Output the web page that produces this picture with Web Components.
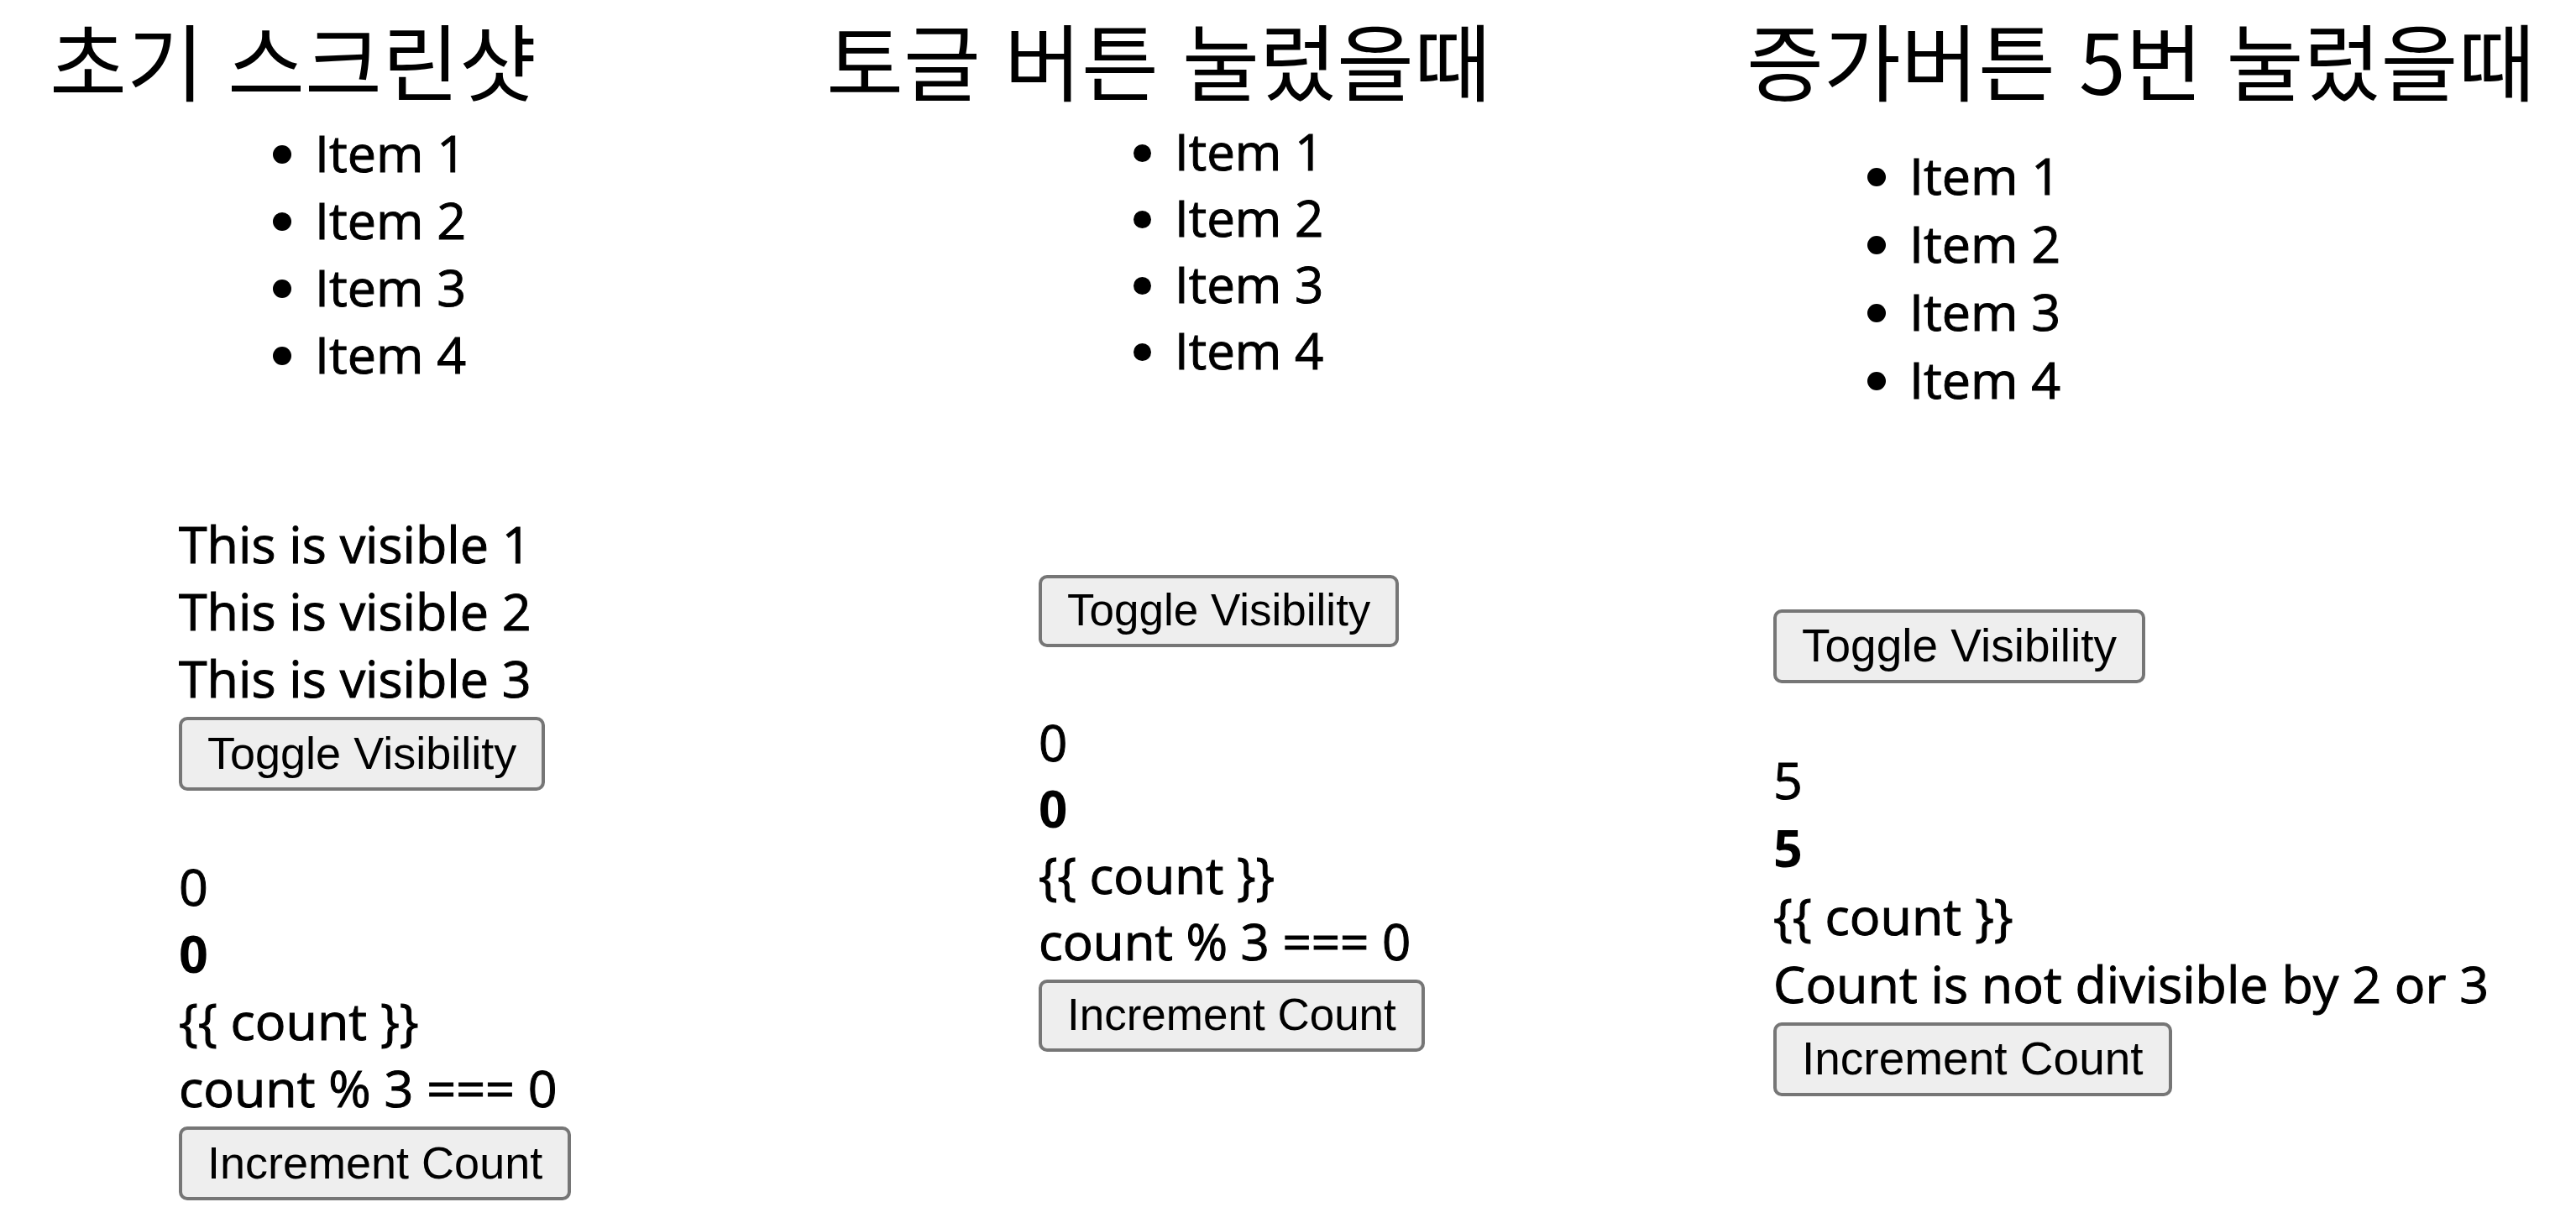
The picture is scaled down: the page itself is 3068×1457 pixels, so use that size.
<!DOCTYPE html>
<html lang="ko">
<head>
<meta charset="utf-8">
<meta name="viewport" content="width=device-width, initial-scale=1">
<title>Toggle and count states</title>
<style>
  body { margin: 0; background: #fff; color: #000; }
</style>
</head>
<body>
<template id="board-template">
  <style>
    :host {
      display: grid;
      grid-template-columns: 925fr 1096fr 988fr;
      padding-left: 59px;
      font-family: "Open Sans", "Noto Sans CJK KR", sans-serif;
    }
  </style>
  <slot></slot>
</template>

<template id="state-template">
  <style>
    :host { display: block; min-width: 0; font-size: var(--text); line-height: var(--line); }
    h2 {
      margin: 0 0 var(--list-gap);
      font: 400 100px/139px "Noto Sans CJK KR", sans-serif;
      white-space: nowrap;
    }
    .body { padding-left: var(--indent); white-space: nowrap; -webkit-text-stroke: 1px currentColor; }
    push-button { -webkit-text-stroke: 0; }
    ul { margin: 0 0 var(--block-gap); padding-left: 162px; }
    p { margin: 0; }
    b { -webkit-text-stroke: 0; }
    .group + .group { margin-top: 74px; }
  </style>
  <h2><slot name="title"></slot></h2>
  <div class="body">
    <ul><li>Item 1</li><li>Item 2</li><li>Item 3</li><li>Item 4</li></ul>
    <div class="group">
      <slot name="visible"></slot>
      <push-button>Toggle Visibility</push-button>
    </div>
    <div class="group">
      <p class="count"></p>
      <p><b class="count"></b></p>
      <p>{{ count }}</p>
      <p class="result"></p>
      <push-button>Increment Count</push-button>
    </div>
  </div>
</template>

<template id="button-template">
  <style>
    :host { display: flex; padding-top: 6px; }
    button {
      box-sizing: border-box;
      height: var(--button-height);
      margin: 0;
      padding: 0 30px 2px;
      border: 4px solid #767676;
      border-radius: 10px;
      background: #eee;
      color: #000;
      font: 400 var(--button-text)/62px "Liberation Sans", Arial, sans-serif;
    }
  </style>
  <button type="button"><slot></slot></button>
</template>

<state-board>
  <count-state count="0" style="--text:61px;--line:80px;--list-gap:3px;--block-gap:146px;--indent:154px;--button-height:88px;--button-text:54px">
    <span slot="title">초기 스크린샷</span>
    <div slot="visible">This is visible 1</div>
    <div slot="visible">This is visible 2</div>
    <div slot="visible">This is visible 3</div>
  </count-state>
  <count-state count="0" style="--text:60px;--line:79px;--list-gap:2px;--block-gap:222px;--indent:253px;--button-height:86px;--button-text:53px">
    <span slot="title">토글 버튼 눌렀을때</span>
  </count-state>
  <count-state count="5" style="--text:61px;--line:81px;--list-gap:29px;--block-gap:228px;--indent:32px;--button-height:88px;--button-text:55px">
    <span slot="title">증가버튼 5번 눌렀을때</span>
  </count-state>
</state-board>

<script>
  const stamp = (host, id) => {
    const root = host.attachShadow({ mode: 'open' });
    root.append(document.getElementById(id).content.cloneNode(true));
    return root;
  };

  customElements.define('push-button', class extends HTMLElement {
    constructor() { super(); stamp(this, 'button-template'); }
  });

  customElements.define('count-state', class extends HTMLElement {
    connectedCallback() {
      if (this.shadowRoot) return;
      const root = stamp(this, 'state-template');
      const [toggle, increment] = root.querySelectorAll('push-button');
      let count = Number(this.getAttribute('count'));
      const render = () => {
        root.querySelectorAll('.count').forEach(el => { el.textContent = count; });
        root.querySelector('.result').textContent =
          count % 3 === 0 ? 'count % 3 === 0' :
          count % 2 === 0 ? 'count % 2 === 0' :
          'Count is not divisible by 2 or 3';
      };
      increment.addEventListener('click', () => { count += 1; render(); });
      toggle.addEventListener('click', () => {
        this.querySelectorAll('[slot=visible]').forEach(el => { el.hidden = !el.hidden; });
      });
      render();
    }
  });

  customElements.define('state-board', class extends HTMLElement {
    constructor() { super(); stamp(this, 'board-template'); }
  });
</script>
</body>
</html>
